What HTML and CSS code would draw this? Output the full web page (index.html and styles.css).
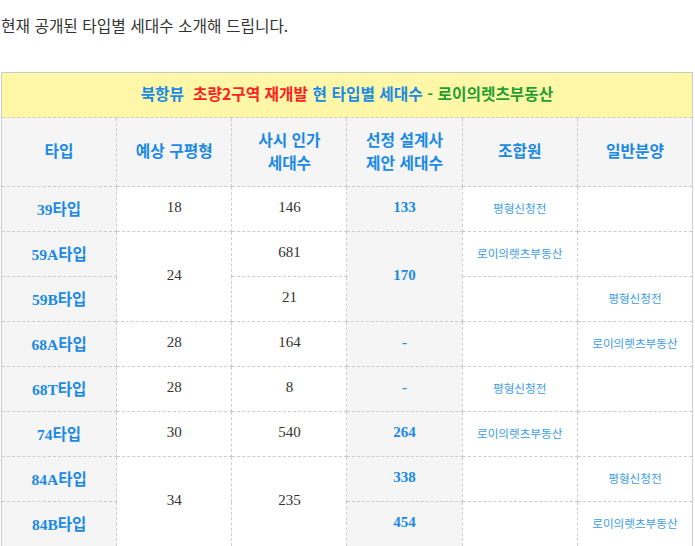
FILE: index.html
```html
<!DOCTYPE html>
<html lang="ko">
<head>
<meta charset="utf-8">
<link rel="stylesheet" href="styles.css">
</head>
<body>
<p class="intro">현재 공개된 타입별 세대수 소개해 드립니다.</p>
<table class="units">
  <tr class="title-row">
    <td colspan="6"><span class="t-blue">북항뷰</span>&nbsp; <span class="t-red">초량2구역 재개발</span> <span class="t-blue">현 타입별 세대수</span> <span class="t-green">- 로이의렛츠부동산</span></td>
  </tr>
  <tr class="head-row">
    <th>타입</th>
    <th>예상 구평형</th>
    <th>사시 인가<br>세대수</th>
    <th>선정 설계사<br>제안 세대수</th>
    <th>조합원</th>
    <th>일반분양</th>
  </tr>
  <tr>
    <td class="type">39타입</td>
    <td class="num">18</td>
    <td class="num">146</td>
    <td class="prop">133</td>
    <td class="small">평형신청전</td>
    <td class="small"></td>
  </tr>
  <tr>
    <td class="type">59A타입</td>
    <td class="num" rowspan="2">24</td>
    <td class="num">681</td>
    <td class="prop" rowspan="2">170</td>
    <td class="small">로이의렛츠부동산</td>
    <td class="small"></td>
  </tr>
  <tr>
    <td class="type">59B타입</td>
    <td class="num">21</td>
    <td class="small"></td>
    <td class="small">평형신청전</td>
  </tr>
  <tr>
    <td class="type">68A타입</td>
    <td class="num">28</td>
    <td class="num">164</td>
    <td class="prop">-</td>
    <td class="small"></td>
    <td class="small">로이의렛츠부동산</td>
  </tr>
  <tr>
    <td class="type">68T타입</td>
    <td class="num">28</td>
    <td class="num">8</td>
    <td class="prop">-</td>
    <td class="small">평형신청전</td>
    <td class="small"></td>
  </tr>
  <tr>
    <td class="type">74타입</td>
    <td class="num">30</td>
    <td class="num">540</td>
    <td class="prop">264</td>
    <td class="small">로이의렛츠부동산</td>
    <td class="small"></td>
  </tr>
  <tr>
    <td class="type">84A타입</td>
    <td class="num" rowspan="2">34</td>
    <td class="num" rowspan="2">235</td>
    <td class="prop">338</td>
    <td class="small"></td>
    <td class="small">평형신청전</td>
  </tr>
  <tr>
    <td class="type">84B타입</td>
    <td class="prop">454</td>
    <td class="small"></td>
    <td class="small">로이의렛츠부동산</td>
  </tr>
</table>
</body>
</html>
```

FILE: styles.css
```css
html, body {
  margin: 0;
  padding: 0;
  background: #fff;
}
body {
  padding: 0 1px;
  font-family: "Noto Sans CJK KR", "Noto Sans", sans-serif;
  color: #333;
}
.intro {
  margin: 14px 0 34px;
  font-size: 15.75px;
  line-height: 24px;
  color: #333;
}
.units {
  width: 692px;
  border-collapse: collapse;
  border: 1px solid #ccc;
  table-layout: fixed;
}
.units td, .units th {
  border: 1px dashed #ccc;
  padding: 0 0 3px;
  text-align: center;
  vertical-align: middle;
  height: 41px;
}
.title-row td {
  background: #fff7a8;
  font-size: 15.75px;
  font-weight: bold;
}
.t-blue { color: #1b8ae6; }
.t-red { color: #ff1f1f; }
.t-green { color: #1f9f2f; }
.head-row th {
  background: #f5f5f5;
  color: #1b8ae6;
  font-size: 15.75px;
  font-weight: bold;
  line-height: 23px;
  height: 65px;
}
.type {
  background: #f5f5f5;
  color: #1b8ae6;
  font-weight: bold;
  font-size: 15.5px;
  font-family: "Liberation Serif", "Noto Sans CJK KR", serif;
}
.num {
  font-family: "Liberation Serif", "Noto Sans CJK KR", serif;
  font-size: 15px;
  color: #333;
}
.prop {
  background: #f5f5f5;
  font-family: "Liberation Serif", "Noto Sans CJK KR", serif;
  font-size: 15px;
  font-weight: bold;
  color: #1b8ae6;
}
.small {
  font-size: 11.6px;
  color: #3d9ce8;
}
```
